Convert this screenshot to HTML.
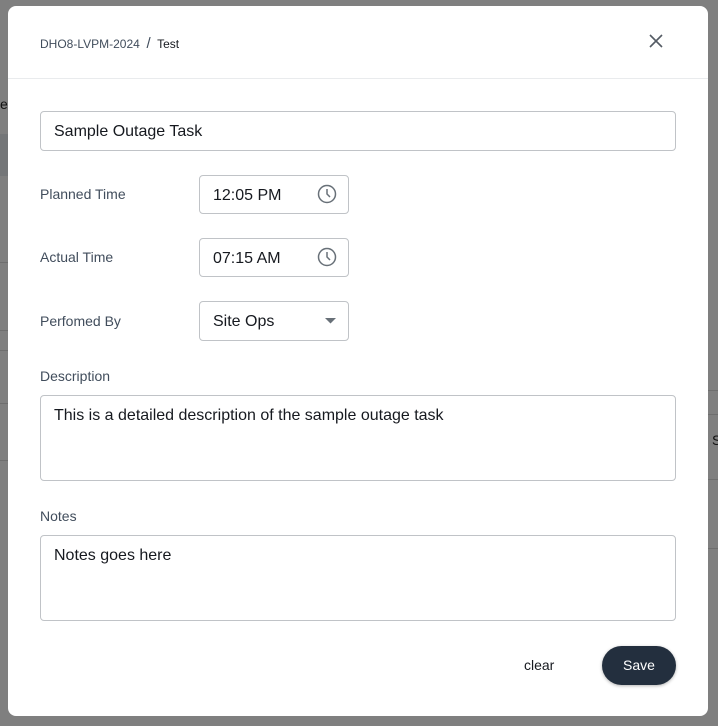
<!DOCTYPE html>
<html><head><style>
body{margin:0;width:718px;height:726px;background:#7f7f7f;position:relative;overflow:hidden;font-family:"Liberation Sans",sans-serif;color:#16191f}
.l{position:absolute;left:0;width:8px;height:1px;background:#6e6e6e}
.r{position:absolute;left:708px;width:10px;height:1px;background:#6e6e6e}
.m{position:absolute;left:8px;top:6px;width:700px;height:710px;background:#fff;border-radius:8px}
.hd{height:72px;border-bottom:1px solid #e9ebed;position:relative}
.bc{position:absolute;left:32px;top:29px;font-size:12px;color:#414d5c}
.inp{position:absolute;border:1px solid #c0c3c7;border-radius:4px;background:#fff;font-size:16px;box-sizing:border-box}
.lab{position:absolute;left:32px;font-size:14px;color:#414d5c}
</style></head><body>
<div style="position:absolute;left:0;top:134px;width:8px;height:42px;background:#747678"></div>
<div class="l" style="top:262px"></div><div class="l" style="top:330px"></div><div class="l" style="top:350px"></div><div class="l" style="top:403px"></div><div class="l" style="top:460px"></div>
<div class="r" style="top:390px"></div><div class="r" style="top:414px"></div><div class="r" style="top:479px"></div><div class="r" style="top:548px"></div>
<div style="position:absolute;left:0;top:96px;font-size:14px;color:#111">e</div>
<div style="position:absolute;left:712px;top:432px;font-size:14px;color:#111">S</div>
<div class="m">
<div class="hd"><div class="bc">DHO8-LVPM-2024 &nbsp;<span style="font-size:15px">/</span>&nbsp; <span style="color:#16191f">Test</span></div>
<svg style="position:absolute;left:641px;top:28px" width="14" height="14" viewBox="0 0 14 14"><path d="M1 1L13 13M13 1L1 13" stroke="#545b64" stroke-width="1.6"/></svg></div>
<div class="inp" style="left:32px;top:105px;width:636px;height:40px;padding:11px 13px">Sample Outage Task</div>
<div class="lab" style="top:180px">Planned Time</div>
<div class="inp" style="left:191px;top:169px;width:150px;height:39px;padding:11px 13px">12:05 PM</div>
<svg style="position:absolute;left:309px;top:178px" width="20" height="20" viewBox="0 0 20 20"><circle cx="10" cy="10" r="8.5" fill="none" stroke="#687078" stroke-width="1.5"/><path d="M10 5v5l3 3" fill="none" stroke="#687078" stroke-width="1.5"/></svg>
<div class="lab" style="top:243px">Actual Time</div>
<div class="inp" style="left:191px;top:232px;width:150px;height:39px;padding:11px 13px">07:15 AM</div>
<svg style="position:absolute;left:309px;top:241px" width="20" height="20" viewBox="0 0 20 20"><circle cx="10" cy="10" r="8.5" fill="none" stroke="#687078" stroke-width="1.5"/><path d="M10 5v5l3 3" fill="none" stroke="#687078" stroke-width="1.5"/></svg>
<div class="lab" style="top:307px">Perfomed By</div>
<div class="inp" style="left:191px;top:295px;width:150px;height:40px;padding:11px 13px">Site Ops</div>
<svg style="position:absolute;left:317px;top:312px" width="11" height="6"><path d="M0 0h11L5.5 5.5z" fill="#687078"/></svg>
<div class="lab" style="top:362px">Description</div>
<div class="inp" style="left:32px;top:389px;width:636px;height:86px;padding:11px 13px">This is a detailed description of the sample outage task</div>
<div class="lab" style="top:502px">Notes</div>
<div class="inp" style="left:32px;top:529px;width:636px;height:86px;padding:11px 13px">Notes goes here</div>
<div style="position:absolute;left:516px;top:651px;font-size:14px">clear</div>
<div style="position:absolute;left:594px;top:640px;width:74px;height:39px;border-radius:20px;background:#232f3e;color:#fff;font-size:14px;text-align:center;line-height:39px;box-shadow:0 1px 3px rgba(0,0,0,.3)">Save</div>
</div>
</body></html>
